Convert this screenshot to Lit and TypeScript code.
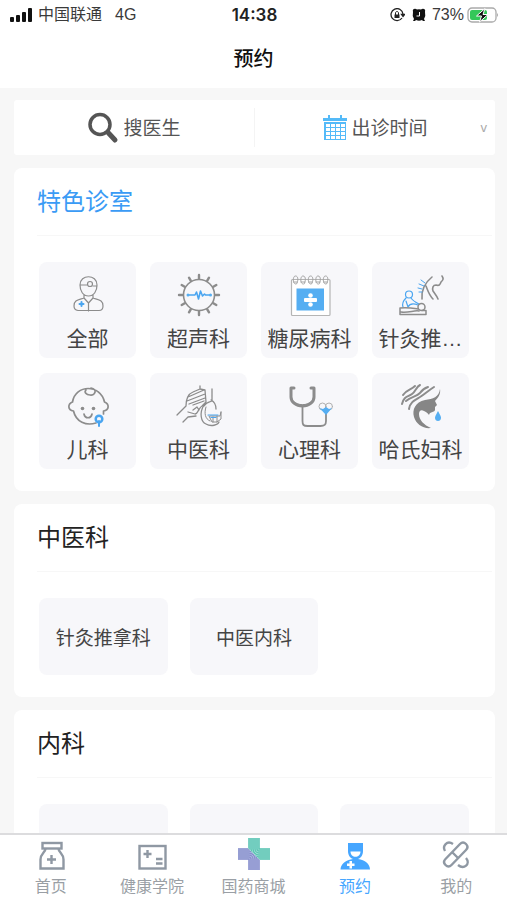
import { LitElement, html, css, svg, nothing } from "lit";
import { customElement } from "lit/decorators.js";
import { classMap } from "lit/directives/class-map.js";

const teeth = Array.from({ length: 12 }, (_, i) => i * 30);
const bands = [0, 2, 4, 6, 8, 10];

const clinicIcons: Record<string, unknown> = {
  doctor: svg`
    <path d="M16 13c0-11 17-11 17 0c0 6-3 11-8.500 11S16 19 16 13z M16 13h7M29 14h4M20 23v3c-6 2-10 2-10 8c0 3 1 4 4 4.500h21c3 0 4-2 4-4.500c0-6-4-6-10-8v-3M20 26l4.500 5l4.500-5M24.500 31v8"/>
    <circle cx="26" cy="12" r="2.500"/>
    <path class="blue" stroke-width="2" d="M17.500 30v4M15.500 32h4"/>`,
  ultrasound: svg`
    <circle cx="24" cy="23" r="15.500" stroke-width="1.600"/>
    ${teeth.map((a) => svg`<path stroke-width="2.400" d="M24 6.500V3" transform="rotate(${a} 24 23)"/>`)}
    <path class="blue" stroke-width="1.600" d="M13 23h7l1.500-3l2 7l2-8l2 5l2-2l1 1h5"/>
    <circle class="blue-fill" cx="13" cy="23" r="1.500"/><circle class="blue-fill" cx="35.500" cy="23" r="1.500"/>`,
  calendar: svg`
    <rect x="5.500" y="7.500" width="38.500" height="36" rx="1" fill="#fff" stroke="#b5b5b5"/>
    <rect class="blue-fill" x="10.500" y="16.500" width="27.500" height="22"/>
    ${[9.5, 17, 24.5, 32, 39.5].map(
      (x) => svg`<path stroke-width="1" stroke="#a5a5a5" d="M${x} 12c-3 0-3-8 0-8s3 5 1 8M${x - 2} 10h4"/>`
    )}
    <rect x="18" y="26" width="13" height="4" rx="1" fill="#fff" stroke="none"/>
    <circle cx="24.500" cy="23.500" r="2.300" fill="#fff" stroke="none"/>
    <circle cx="24.500" cy="32.500" r="2.300" fill="#fff" stroke="none"/>`,
  acupuncture: svg`
    <path stroke-width="1.600" d="M35 5c-5 4-11 10-10 22M45 4c2 3 1 4-1 6c-1 3-2 4-5 3c-3 0-4 3-3 6c2 3 4 5 5 8M29 14c2 5 3 9 7 13"/>
    <path class="blue" stroke-width="1" d="M24 8l4 3M22 12l5 2M21 16l4 1M22 20h3"/>
    <circle class="blue" cx="12" cy="22.500" r="3.500"/>
    <path class="blue" d="M9 26c-3 3-4 6-3 9M14 26c2 3 4 4 8 6M9 29l2 6M11 35c2-4 5-4 10-2"/>
    <circle cx="24.500" cy="35" r="3.500" stroke-width="1.500"/>
    <path stroke-width="1.500" d="M3 42.500V36c7-1 12 0 18 1M3 42.500h26v-4h-4M4 40c8 1 13-2 18-1"/>`,
  baby: svg`
    <path stroke-width="1.700" d="M32 40c-10 3-20-1-22.500-12c-6-1-6-7-1-9c3-18 28-18 32 0c5 2 5 8-1 9v3M27 5c7 1 4 8-1 7c-4 0-6-3-4-5"/>
    <circle cx="18.500" cy="25.500" r="1.800" fill="#8c8c8c" stroke="none"/>
    <circle cx="29.500" cy="25.500" r="1.800" fill="#8c8c8c" stroke="none"/>
    <path stroke-width="1.700" d="M20 31c1 5 7 5 8 0"/>
    <circle class="blue" stroke-width="2.500" cx="35" cy="36" r="3.300"/>
    <path class="blue" stroke-width="2" d="M35 38v5"/>`,
  pulse: svg`
    <path stroke-width="1.300" d="M2 32l9-9c0-6 2-12 7-14l7-3l5 1l1 12l-4 4c-3 1-4 8-7 8l-7-2M8 39l5-5l8-1M13 14l16-7M12 18l18-7M14 21l16-6M18 22l11-4M25 3v3M37 6v12c-2 1-5 0-8 5M36 17c4 2 5 5 5 9M29 22c-5 8-3 17 2 19c5 3 12 1 13-2M18 27l4-3l2 3"/>
    <path stroke-width="1" d="M31 24c-2 6-1 12 4 14M35 33h10l1-4M46 29v7l-4 3h-5l-3-6M38 34v5M42 33v6"/>
    <path class="blue" d="M33 32h10M36 34.500h5"/>`,
  stethoscope: svg`
    <path stroke-width="3" d="M8 5H5v9c0 5 5 9 11.500 9S28 19 28 14V5h-3"/>
    <path stroke-width="1" d="M7 18c5 5 14 5 19 0"/>
    <path stroke-width="1.800" d="M16.500 24v14c0 4 1 5 5 5h13c4 0 5.500-1 5.500-5v-8"/>
    <circle cx="36.500" cy="23.500" r="3.500" stroke="#b0b0b0" stroke-width="1"/>
    <circle cx="43" cy="23.500" r="3.500" stroke="#b0b0b0" stroke-width="1"/>
    <path class="blue-fill" d="M33.500 25l3.500 1l3-2l3 2l3-1l-6 7z"/>`,
  woman: svg`
    <path fill="#868686" stroke="none" d="M43 6C42 14 36 16 28 17C18 19 15 27 17 34C19 41 26 46 34 45C27 42 22 37 22 31C22 28 24 26 27 28C30 29 31 31 32 32C33 28 37 30 38 27L38 24L40 22L38 18C41 15 44 11 43 6z"/>
    <path stroke-width="2" d="M5 21c2-8 6-7 10-10s4-7 8-9M12 26c1-7 6-9 11-12s9-7 14-10M6 12c3-5 8-5 12-9M9 18c6-5 10-4 14-8c2-3 5-5 8-6"/>
    <path class="blue-fill" d="M41 28c-2 4-3 5-3 7c0 4 6 4 6 0c0-2-1-3-3-7z"/>`,
};

const tabIcons: Record<string, unknown> = {
  home: svg`<rect x="8.500" y="5" width="19" height="5.500"/><path d="M11.500 10.500c0 4-5 5-5 11v9h23v-9c0-6-5-7-5-11M17.500 17v9M13 21.500h9"/>`,
  school: svg`<rect x="4.500" y="8" width="26" height="22.500"/><path d="M12.500 12v8M8.500 16h8M21 21h6.500M21 25.500h6.500"/>`,
  mall: svg`
    <clipPath id="lower"><path d="M-1-2L35 34H-1z"/></clipPath>
    <clipPath id="upper"><path d="M-1-2L35 34V-2z"/></clipPath>
    <g clip-path="url(#lower)" stroke="#8890cc" fill="none" stroke-width="1.500">
      <path stroke="#c3c8ea" stroke-width="11" d="M1 16H12Q17 16 17 21V32"/>
      ${bands.map((b) => svg`<path d="M1 ${21 - b}H12A${b} ${b} 0 0 1 ${12 + b} 21V32"/>`)}
    </g>
    <g clip-path="url(#upper)" stroke="#5cc5b4" fill="none" stroke-width="1.500">
      <path stroke="#b5e5dd" stroke-width="11" d="M17 0V11Q17 16 22 16H33"/>
      ${bands.map((b) => svg`<path d="M${12 + b} 0V11A${10 - b} ${10 - b} 0 0 0 22 ${21 - b}H33"/>`)}
    </g>`,
  booking: svg`<path fill="#46a6ff" stroke="none" d="M10 5h15v8c0 4-2 7-5 8c7 1 12 5 12 10.500H2.500C2.500 26 8 22 15 21c-3-1-5-4-5-8z"/>
    <path fill="#fff" stroke="none" d="M12.500 13.500h10c0 7-10 7-10 0zM11.500 23h2.500v2.500h2.500V28h-2.500v2.500h-2.500V28H9v-2.500h2.500z"/>`,
  mine: svg`<path d="M6.500 27c-2-2-2-4 0-6L21 6c2-2 4-2 6 0s2 4 0 6L12.500 27c-2 2-4 2-6 0zM13 14l6 6M6 13c-3-5 2-11 8-7M27 20c5 6-2 12-8 7"/>`,
};

const clinics = [
  ["doctor", "全部"],
  ["ultrasound", "超声科"],
  ["calendar", "糖尿病科"],
  ["acupuncture", "针灸推…"],
  ["baby", "儿科"],
  ["pulse", "中医科"],
  ["stethoscope", "心理科"],
  ["woman", "哈氏妇科"],
];

const tabs = [
  ["home", "首页"],
  ["school", "健康学院"],
  ["mall", "国药商城"],
  ["booking", "预约"],
  ["mine", "我的"],
];

@customElement("status-bar")
export class StatusBar extends LitElement {
  static styles = css`
    :host {
      display: grid;
      grid-template-columns: 1fr auto 1fr;
      align-items: center;
      height: 30px;
      padding: 0 8px 0 10px;
      font: 16px/30px "Liberation Sans", "Noto Sans CJK SC", sans-serif;
      color: #3a3a3a;
    }
    .side { display: flex; align-items: center; }
    .network { margin-left: 13px; }
    .signal { margin-right: 5px; }
    .time { font-family: Inter, sans-serif; font-weight: 600; font-size: 17px; color: #222; }
    .end { justify-content: flex-end; }
    .lock { margin-right: 7px; }
    .alarm { margin-right: 6px; }
    .battery { margin-left: 3px; }
    svg { display: block; flex: none; }
  `;
  render() {
    return html`
      <div class="side">
        <svg class="signal" width="23" height="14" viewBox="0 0 23 14" fill="#111">
          <rect y="9" width="4" height="5" rx="1" /><rect x="6" y="7" width="4" height="7" rx="1" />
          <rect x="12" y="4" width="4" height="10" rx="1" /><rect x="18" width="4" height="14" rx="1" />
        </svg>
        <span>中国联通</span><span class="network">4G</span>
      </div>
      <span class="time">14:38</span>
      <div class="side end">
        <svg class="lock" width="15" height="14" viewBox="0 0 15 14" fill="none" stroke="#222" stroke-width="1.300">
          <path d="M12 10a6 6 0 1 1 1-4M11.500 6.500h3l-1.500 2z" />
          <rect x="4.500" y="6.500" width="5" height="3.500" fill="#222" stroke="none" /><path stroke-width="1" d="M5.500 7V5c0-2 3-2 3 0v2" />
        </svg>
        <svg class="alarm" width="14" height="14" viewBox="0 0 14 14">
          <path fill="#111" d="M1 4C0 1 3 0 5 1.500Q7 1 9 1.500C11 0 14 1 13 4Q14 8 12 11l1 2h-2l-1-1q-3 1.500-6 0l-1 1H1l1-2Q0 8 1 4z" />
          <path fill="none" stroke="#fff" d="M7.500 4v4H4.500" />
        </svg>
        <span>73%</span>
        <svg class="battery" width="32" height="16" viewBox="0 0 32 16">
          <rect x="1" y="1" width="28" height="14" rx="4" fill="#fff" stroke="#aaa" stroke-width="1.300" />
          <rect x="3" y="3" width="17" height="10" rx="2" fill="#34c759" />
          <path fill="#aaa" d="M30 6v4q2-2 0-4z" />
          <path d="M18 1.500L9.500 9h5L12.500 15L21 7.500h-5z" fill="#111" stroke="#fff" />
        </svg>
      </div>
    `;
  }
}

@customElement("app-root")
export class AppRoot extends LitElement {
  static styles = css`
    * { box-sizing: border-box; }
    :host {
      display: flex;
      flex-direction: column;
      height: 100vh;
      background: #f7f7f7;
      font-family: "Liberation Sans", "Noto Sans CJK SC", sans-serif;
      color: #333;
    }
    button, input, select { font: inherit; color: inherit; border: 0; padding: 0; margin: 0; background: none; outline: none; }
    h1, h2 { margin: 0; }
    svg { display: block; flex: none; }
    header { flex: none; background: #fff; }
    h1 {
      height: 58px;
      line-height: 56px;
      text-align: center;
      font-size: 20px;
      font-weight: 500;
      color: #111;
      font-family: "Noto Sans CJK SC", sans-serif;
    }
    main {
      flex: 1;
      min-height: 0;
      overflow: hidden;
      padding: 12px 12px 0 14px;
      display: flex;
      flex-direction: column;
      gap: 13px;
    }
    .filters {
      flex: none;
      display: flex;
      align-items: center;
      height: 55px;
      border-radius: 3px;
      background: #fff;
      font-size: 19px;
      color: #555;
    }
    .filter {
      flex: 1;
      height: 39px;
      display: flex;
      align-items: center;
      justify-content: center;
      gap: 5px;
      position: relative;
    }
    .filter + .filter { border-left: 1px solid #f4f4f4; }
    .filter input, .filter select { height: 32px; padding-top: 2px; }
    .filter input { width: 58px; }
    .filter input::placeholder { color: #555; opacity: 1; }
    .filter select { appearance: none; width: 76px; }
    .caret { position: absolute; right: 8px; font-size: 13px; color: #aaa; }
    section { flex: none; background: #fff; border-radius: 8px; padding-bottom: 22px; }
    h2 {
      height: 68px;
      margin: 0 3px 0 23px;
      line-height: 68px;
      font-size: 24px;
      font-weight: 400;
      color: #222;
      border-bottom: 1px solid #f7f7f7;
    }
    .featured { color: #3a9bf5; }
    .clinics, .rooms { display: grid; padding: 26px 26px 0 25px; }
    .clinics { grid-template-columns: repeat(4, minmax(0, 1fr)); gap: 15px 14px; }
    .rooms { grid-template-columns: repeat(3, minmax(0, 1fr)); gap: 22px; }
    .clinic, .room { background: #f7f7fa; border-radius: 8px; }
    .clinic {
      height: 96px;
      padding: 10px 5px 4px;
      display: flex;
      flex-direction: column;
      align-items: center;
      justify-content: space-between;
      font-size: 21px;
      line-height: 30px;
      color: #444;
      white-space: nowrap;
    }
    .clinic svg { fill: none; stroke: #8c8c8c; stroke-width: 1.2; stroke-linecap: round; stroke-linejoin: round; }
    .clinic .blue { stroke: #4aa5f0; }
    .clinic .blue-fill { fill: #55aef2; stroke: none; }
    .room { height: 77px; font-size: 19px; color: #444; }
    nav {
      flex: none;
      display: flex;
      height: 67px;
      background: #fff;
      border-top: 2px solid #dcdcde;
    }
    nav a {
      flex: 1;
      padding-top: 3px;
      display: flex;
      flex-direction: column;
      align-items: center;
      gap: 3px;
      font-size: 16px;
      line-height: 24px;
      color: #9a9fa5;
      text-decoration: none;
    }
    nav svg { fill: none; stroke: #8f98a3; stroke-width: 2.4; }
    nav .active { color: #46a6ff; }
  `;

  render() {
    return html`
      <header>
        <status-bar></status-bar>
        <h1>预约</h1>
      </header>
      <main>
        <div class="filters">
          <label class="filter">
            <svg width="32" height="32" viewBox="0 0 32 32" fill="none" stroke="#555">
              <circle cx="13" cy="12.500" r="10" stroke-width="3.500" />
              <path stroke-width="5" stroke-linecap="round" d="M21.500 21l6.500 7" />
            </svg>
            <input type="text" placeholder="搜医生" />
          </label>
          <label class="filter">
            <svg width="24" height="26" viewBox="0 0 24 26">
              <path fill="#54baf8" d="M5 0h2v3h10V0h2v3h5v3H0V3h5zM1 7h22v18H1z" />
              ${[0, 1, 2, 3].map((r) =>
                [0, 1, 2, 3].map((c) => svg`<rect x="${3 + c * 5}" y="${9 + r * 4}" width="4" height="3" fill="#fff"/>`)
              )}
            </svg>
            <select><option>出诊时间</option></select>
            <span class="caret">v</span>
          </label>
        </div>
        <section>
          <h2 class="featured">特色诊室</h2>
          <div class="clinics">
            ${clinics.map(
              ([icon, name]) => html`<button class="clinic">
                <svg width="48" height="46" viewBox="0 0 48 46">${clinicIcons[icon]}</svg>
                <span>${name}</span>
              </button>`
            )}
          </div>
        </section>
        <section>
          <h2>中医科</h2>
          <div class="rooms">
            <button class="room">针灸推拿科</button>
            <button class="room">中医内科</button>
          </div>
        </section>
        <section>
          <h2>内科</h2>
          <div class="rooms">
            <div class="room"></div>
            <div class="room"></div>
            <div class="room"></div>
          </div>
        </section>
      </main>
      <nav>
        ${tabs.map(
          ([icon, name]) => html`<a
            href="#${icon}"
            class=${classMap({ active: icon === "booking" })}
            aria-current=${icon === "booking" ? "page" : nothing}
          >
            <svg width="34" height="34" viewBox="0 0 34 34">${tabIcons[icon]}</svg>
            <span>${name}</span>
          </a>`
        )}
      </nav>
    `;
  }
}
